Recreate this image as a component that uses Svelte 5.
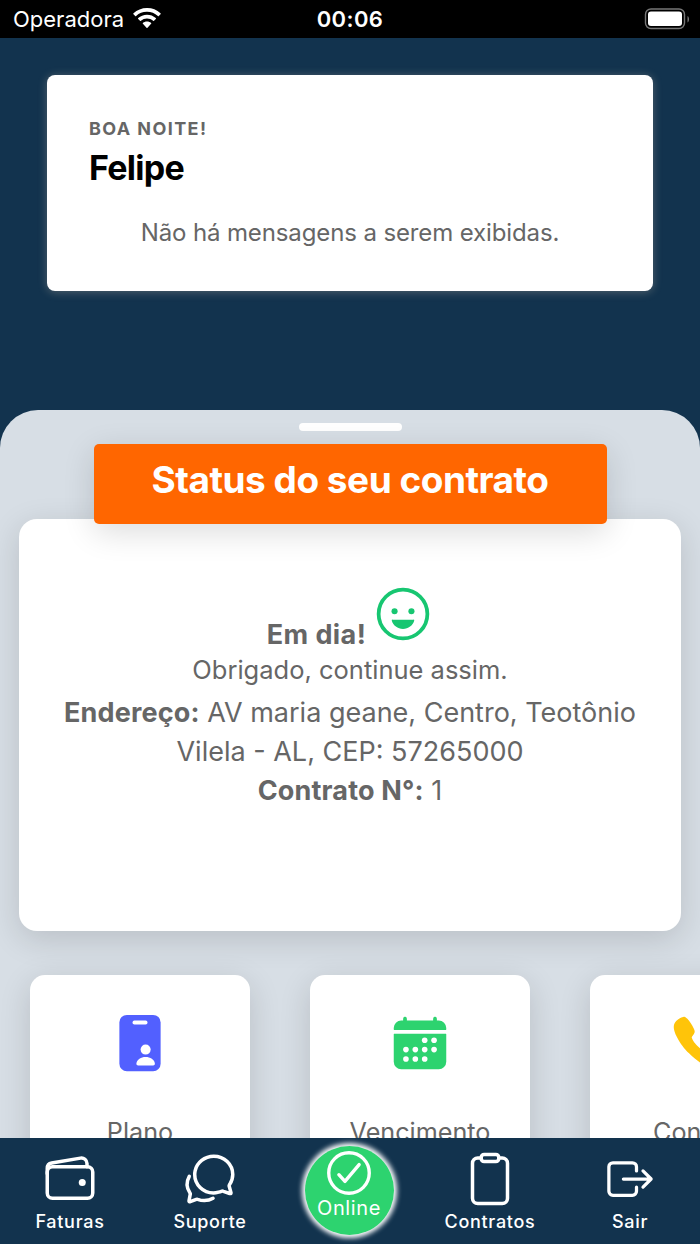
<script>
	let carrier = 'Operadora';
	let time = '00:06';

	let user = { greeting: 'BOA NOITE!', name: 'Felipe' };

	const shortcuts = [
		{ id: 'plan', label: 'Plano', color: '#5260ff' },
		{ id: 'due', label: 'Vencimento', color: '#2dd36f' },
		{ id: 'contact', label: 'Contato', color: '#ffc409' }
	];

	const tabs = [
		{ id: 'invoices', label: 'Faturas' },
		{ id: 'support', label: 'Suporte' },
		{ id: 'online', label: 'Online' },
		{ id: 'contracts', label: 'Contratos' },
		{ id: 'exit', label: 'Sair' }
	];

	let active = $state('online');
</script>

<div class="app">
	<header class="statusbar">
		<div class="carrier">
			<span>{carrier}</span>
			<svg width="28" height="21" viewBox="0 0 28 21" fill="#fff">
				<path d="M14 0C8.8 0 4 2 .5 5.300a.6.6 0 0 0 0 .9l1.700 1.700a.6.6 0 0 0 .9 0A15.700 15.700 0 0 1 14 3.700c4.100 0 7.900 1.600 10.900 4.200a.6.6 0 0 0 .9 0l1.700-1.700a.6.6 0 0 0 0-.9A19.600 19.600 0 0 0 14 0z" />
				<path d="M14 6.700c-3.400 0-6.500 1.300-8.800 3.400a.6.6 0 0 0 0 .9l1.800 1.800a.6.6 0 0 0 .9 0A9.100 9.100 0 0 1 14 10.500c2.300 0 4.400.9 6.100 2.300a.6.6 0 0 0 .9 0l1.800-1.800a.6.6 0 0 0 0-.9A13.100 13.100 0 0 0 14 6.700z" />
				<path d="M14 13.400c-1.600 0-3 .5-4.100 1.500a.6.6 0 0 0 0 .9l3.600 3.900a.7.7 0 0 0 1 0l3.600-3.900a.6.6 0 0 0 0-.9c-1.100-1-2.500-1.500-4.100-1.500z" />
			</svg>
		</div>
		<div class="time">{time}</div>
		<div class="battery">
			<svg width="46" height="22" viewBox="0 0 46 22">
				<rect x="1.500" y="1" width="39" height="19.500" rx="5.500" fill="none" stroke="#777" stroke-width="1.400" />
				<rect x="4" y="3.500" width="34" height="14.500" rx="3" fill="#fff" />
				<path d="M43.500 8v6.500c1-.6 1.500-1.800 1.500-3.200S44.500 8.600 43.500 8z" fill="#777" />
			</svg>
		</div>
	</header>

	<section class="hero">
		<div class="message">
			<div class="greeting">{user.greeting}</div>
			<h1>{user.name}</h1>
			<p>Não há mensagens a serem exibidas.</p>
		</div>
	</section>

	<main class="sheet">
		<div class="handle"></div>
		<h2>Status do seu contrato</h2>

		<section class="contract">
			<div class="situation">
				<b>Em dia!</b>
				<svg class="smile" viewBox="0 0 512 512" fill="#17c671">
					<circle cx="256" cy="256" r="208" fill="none" stroke="#17c671" stroke-width="32" />
					<circle cx="184" cy="232" r="26" />
					<circle cx="328" cy="232" r="26" />
					<path d="M256.050 384c-45.420 0-83.620-29.530-95.710-69.830a8 8 0 0 1 7.820-10.170h175.690a8 8 0 0 1 7.820 10.170c-11.990 40.300-50.200 69.830-95.620 69.830z" />
				</svg>
			</div>
			<div class="thanks">Obrigado, continue assim.</div>
			<p>
				<b>Endereço:</b> AV maria geane, Centro, Teotônio<br />
				Vilela - AL, CEP: 57265000<br />
				<b>Contrato N°:</b> 1
			</p>
		</section>

		<div class="shortcuts">
			{#each shortcuts as item}
				<div class="shortcut">
					<svg viewBox="0 0 512 512" fill={item.color}>
						{#if item.id === 'plan'}
							<rect x="80" y="16" width="352" height="480" rx="64" />
							<g fill="#fff">
								<rect x="192" y="64" width="128" height="34" rx="16" />
								<circle cx="304" cy="312" r="43" />
								<path d="M240 448c-9 0-16-7-15-17 5-32 39-55 79-55s74 23 79 55c1 10-6 17-15 17z" />
							</g>
						{:else if item.id === 'due'}
							<path d="M480 128a64 64 0 0 0-64-64h-16V48a16 16 0 0 0-32 0v16H144V48a16 16 0 0 0-32 0v16H96a64 64 0 0 0-64 64v12a4 4 0 0 0 4 4h440a4 4 0 0 0 4-4z" />
							<path d="M32 416a64 64 0 0 0 64 64h320a64 64 0 0 0 64-64V179a3 3 0 0 0-3-3H35a3 3 0 0 0-3 3z" />
							<g fill="#fff">
								{#each [[296, 232], [376, 232], [136, 312], [216, 312], [296, 312], [376, 312], [136, 392], [216, 392], [296, 392]] as [cx, cy]}
									<circle {cx} {cy} r="24" />
								{/each}
							</g>
						{:else}
							<path d="M391 480c-19.520 0-46.940-7.060-88-30-49.930-28-88.550-53.850-138.210-103.380C116.910 298.770 93.610 267.790 61 208.450c-36.840-67-30.560-102.120-23.540-117.130C45.820 73.380 58.160 62.650 74.110 52a176.300 176.300 0 0 1 28.640-15.200c1-.43 1.930-.84 2.760-1.210 4.950-2.230 12.450-5.600 21.950-2 6.340 2.380 12 7.250 20.860 16 18.170 17.920 43 57.830 52.160 77.430 6.150 13.210 10.220 21.930 10.230 31.710 0 11.450-5.760 20.280-12.750 29.810-1.310 1.790-2.610 3.500-3.870 5.160-7.610 10-9.280 12.890-8.180 18.050 2.230 10.370 18.860 41.240 46.190 68.510s57.310 42.850 67.720 45.070c5.380 1.150 8.330-.59 18.650-8.470 1.480-1.130 3-2.300 4.590-3.470 10.660-7.930 19.080-13.540 30.260-13.540 9.790 0 18.120 4.220 31.920 11.180 18 9.080 59.110 33.590 77.140 51.780 8.770 8.840 13.660 14.480 16.050 20.810 3.600 9.530.21 17-2 22l-1.210 2.750a176.490 176.490 0 0 1-15.290 28.580c-10.630 15.900-21.400 28.210-39.380 36.580A67.420 67.420 0 0 1 391 480z" />
						{/if}
					</svg>
					<span>{item.label}</span>
				</div>
			{/each}
		</div>
	</main>

	<nav>
		{#each tabs as tab}
			<button class:active={active === tab.id} onclick={() => (active = tab.id)}>
				<span class="tab">
					<svg class={tab.id} viewBox="0 0 512 512" fill="none" stroke="#fff" stroke-width="32" stroke-linecap="round" stroke-linejoin="round">
						{#if tab.id === 'invoices'}
							<rect x="48" y="144" width="416" height="288" rx="48" />
							<path d="M411.360 144v-30A50 50 0 0 0 352 64.900L88.640 109.850A50 50 0 0 0 48 159v49" />
							<circle cx="368" cy="288" r="32" fill="#fff" stroke="none" />
						{:else if tab.id === 'support'}
							<path d="M431 320.600c-1-3.600 1.200-8.600 3.300-12.200a33.680 33.680 0 0 1 2.100-3.100A162 162 0 0 0 464 215c.3-92.200-77.500-167-173.700-167-83.900 0-153.900 57.100-170.300 132.900a160.700 160.700 0 0 0-3.700 34.200c0 92.300 74.800 169.100 171 169.100 15.300 0 35.900-4.600 47.200-7.700s22.500-7.200 25.400-8.300a26.440 26.440 0 0 1 9.300-1.700 26 26 0 0 1 10.100 2l56.700 20.100a13.520 13.520 0 0 0 3.900 1 8 8 0 0 0 8-8 12.850 12.850 0 0 0-.5-2.700z" />
							<path d="M66.460 232a146.230 146.230 0 0 0 6.390 152.670c2.310 3.490 3.610 6.190 3.210 8s-11.930 61.870-11.930 61.870a8 8 0 0 0 2.710 7.680A8.170 8.170 0 0 0 72 464a7.260 7.260 0 0 0 2.910-.6l56.210-22a15.700 15.700 0 0 1 12 .2c18.940 7.380 39.880 12 60.830 12A159.210 159.210 0 0 0 284 432.110" />
						{:else if tab.id === 'online'}
							<circle cx="256" cy="256" r="192" />
							<path d="M352 176 217.600 336 160 272" />
						{:else if tab.id === 'contracts'}
							<path d="M336 64h32a48 48 0 0 1 48 48v320a48 48 0 0 1-48 48H144a48 48 0 0 1-48-48V112a48 48 0 0 1 48-48h32" />
							<rect x="176" y="32" width="160" height="64" rx="26" />
						{:else}
							<path d="M320 176v-40a40 40 0 0 0-40-40H88a40 40 0 0 0-40 40v240a40 40 0 0 0 40 40h192a40 40 0 0 0 40-40v-40M384 176l80 80-80 80M191 256h273" />
						{/if}
					</svg>
					<span class="label">{tab.label}</span>
				</span>
			</button>
		{/each}
	</nav>
</div>

<style>
	:global(body) {
		margin: 0;
	}

	.app {
		width: 700px;
		height: 1244px;
		display: flex;
		flex-direction: column;
		overflow: hidden;
		background: #12334e;
		color: #666;
		font-family: Inter, "Liberation Sans", sans-serif;
	}

	.statusbar {
		height: 37.5px;
		flex-shrink: 0;
		display: grid;
		grid-template-columns: 1fr auto 1fr;
		align-items: center;
		box-sizing: border-box;
		padding: 0 10px 0 13px;
		background: #000;
		color: #fff;
		font-size: 22px;
	}

	.carrier {
		display: flex;
		align-items: center;
		gap: 9px;
	}

	.time {
		margin-right: 3px;
		font-weight: 600;
		letter-spacing: 0.4px;
	}

	.battery {
		display: flex;
		justify-content: flex-end;
	}

	.hero {
		height: 372.5px;
		flex-shrink: 0;
		box-sizing: border-box;
		padding: 37px 47px 0;
	}

	.message {
		height: 216px;
		box-sizing: border-box;
		padding: 42px 42px 0;
		border-radius: 8px;
		background: #fff;
		box-shadow: 0 1px 10px rgba(255, 225, 195, 0.28);
	}

	.greeting {
		font-size: 18px;
		font-weight: 700;
		line-height: 24px;
		letter-spacing: 1.4px;
	}

	h1 {
		margin: 6px 0 0;
		color: #000;
		font-size: 34px;
		font-weight: 700;
		line-height: 42px;
		letter-spacing: -0.7px;
	}

	.message p {
		margin: 28px 0 0;
		font-size: 24px;
		line-height: 32px;
		letter-spacing: -0.12px;
		text-align: center;
	}

	.sheet {
		flex: 1;
		min-height: 0;
		display: flex;
		flex-direction: column;
		align-items: center;
		overflow: hidden;
		border-radius: 38px 38px 0 0;
		background: #d7dee5;
	}

	.handle {
		width: 103px;
		height: 8px;
		margin-top: 13px;
		flex-shrink: 0;
		border-radius: 4px;
		background: #fff;
	}

	h2 {
		position: relative;
		z-index: 1;
		width: 513px;
		height: 80px;
		margin: 13px 0 -5.5px;
		flex-shrink: 0;
		border-radius: 5px;
		background: #ff6600;
		box-shadow: 0 8px 32px rgba(0, 0, 0, 0.14);
		color: #fff;
		font-size: 37px;
		font-weight: 700;
		line-height: 72px;
		letter-spacing: -0.5px;
		text-align: center;
	}

	.contract {
		width: 662px;
		height: 412px;
		box-sizing: border-box;
		flex-shrink: 0;
		padding-top: 65.5px;
		border-radius: 18px;
		background: #fff;
		box-shadow: 0 8px 32px rgba(0, 0, 0, 0.14);
		font-size: 27px;
		line-height: 39px;
		text-align: center;
	}

	.contract b {
		letter-spacing: 0.15px;
	}

	.contract p {
		margin: 4px 0 0;
	}

	.thanks {
		font-size: 25.5px;
	}

	.situation {
		height: 66px;
		display: flex;
		align-items: flex-end;
		justify-content: center;
		gap: 7px;
	}

	.situation b {
		margin-bottom: -4px;
		letter-spacing: 0.4px;
	}

	.smile {
		width: 60px;
		height: 60px;
		align-self: flex-start;
	}

	.shortcuts {
		align-self: flex-start;
		display: flex;
		gap: 60px;
		flex-shrink: 0;
		padding: 44.5px 30px 0;
	}

	.shortcut {
		width: 220px;
		height: 220px;
		box-sizing: border-box;
		display: flex;
		flex-direction: column;
		align-items: center;
		gap: 42.5px;
		padding-top: 37.5px;
		border-radius: 15px;
		background: #fff;
		box-shadow: 0 8px 32px rgba(0, 0, 0, 0.14);
		font-size: 25.2px;
		line-height: 34px;
	}

	.shortcut svg {
		width: 60px;
		height: 60px;
	}

	nav {
		height: 106px;
		flex-shrink: 0;
		display: flex;
		position: relative;
		background: #12334e;
	}

	button {
		flex: 1;
		display: flex;
		justify-content: center;
		padding: 0;
		border: 0;
		background: none;
		color: #fff;
		font: 500 18px/22px Inter, "Liberation Sans", sans-serif;
		letter-spacing: 0.7px;
	}

	.tab {
		display: flex;
		flex-direction: column;
		align-items: center;
		padding-top: 13px;
	}

	.tab svg {
		width: 56px;
		height: 56px;
	}

	.tab .exit {
		width: 52px;
		height: 52px;
		margin: 2px 0;
	}

	.label {
		margin-top: 4px;
	}

	.active .tab {
		width: 89px;
		height: 89px;
		margin: 8px 2px 0 0;
		padding-top: 0;
		border-radius: 50%;
		background: #2dd36f;
		box-shadow: 0 0 5px 3px #fff;
	}

	.active .tab svg {
		width: 54px;
		height: 54px;
	}

	.active .label {
		margin-top: -3px;
		font-size: 20px;
		font-weight: 400;
		letter-spacing: 0.6px;
	}
</style>
